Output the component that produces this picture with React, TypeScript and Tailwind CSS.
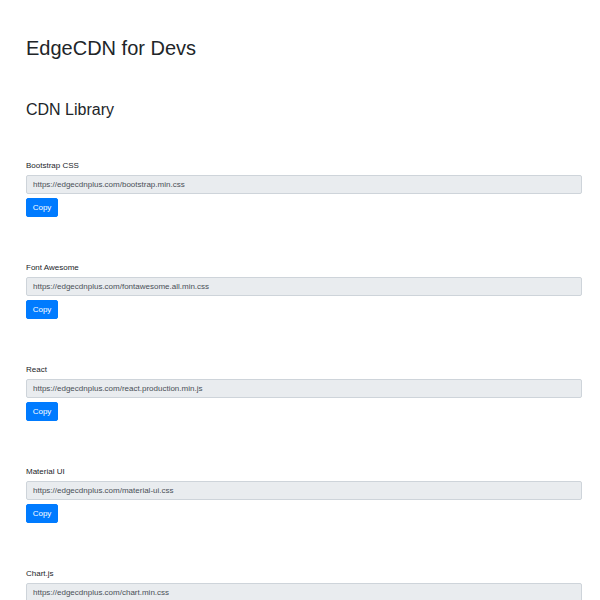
import React from "react";

const libs = [
  { name: "Bootstrap CSS", url: "https://edgecdnplus.com/bootstrap.min.css" },
  { name: "Font Awesome", url: "https://edgecdnplus.com/fontawesome.all.min.css" },
  { name: "React", url: "https://edgecdnplus.com/react.production.min.js" },
  { name: "Material UI", url: "https://edgecdnplus.com/material-ui.css" },
  { name: "Chart.js", url: "https://edgecdnplus.com/chart.min.css" },
];

const LibraryItem = ({ name, url }: { name: string; url: string }) => {
  return (
    <div className="mb-[45px]">
      <label className="block text-[8px] leading-[12px] mb-[3px] text-[#212529]">{name}</label>
      <input
        type="text"
        readOnly
        value={url}
        className="block w-full h-[19px] bg-[#e9ecef] border border-[#ced4da] rounded-[2px] px-[6px] text-[8px] text-[#495057] outline-none"
      />
      <button className="block mt-[4px] h-[19px] w-[32px] bg-[#007bff] text-white text-[8px] rounded-[2px] border border-[#007bff]">
        Copy
      </button>
    </div>
  );
};

export default function App() {
  return (
    <div className="min-h-[600px] bg-white font-['Liberation_Sans',Arial,sans-serif] text-[#212529] pl-[26px] pr-[18px] pt-[36px]">
      <h1 className="text-[20px] leading-[24px] font-normal">EdgeCDN for Devs</h1>
      <h2 className="text-[16px] leading-[19px] font-normal mt-[40px] mb-[41px]">CDN Library</h2>
      <div>
        {libs.map((l) => (
          <LibraryItem key={l.name} name={l.name} url={l.url} />
        ))}
      </div>
    </div>
  );
}
